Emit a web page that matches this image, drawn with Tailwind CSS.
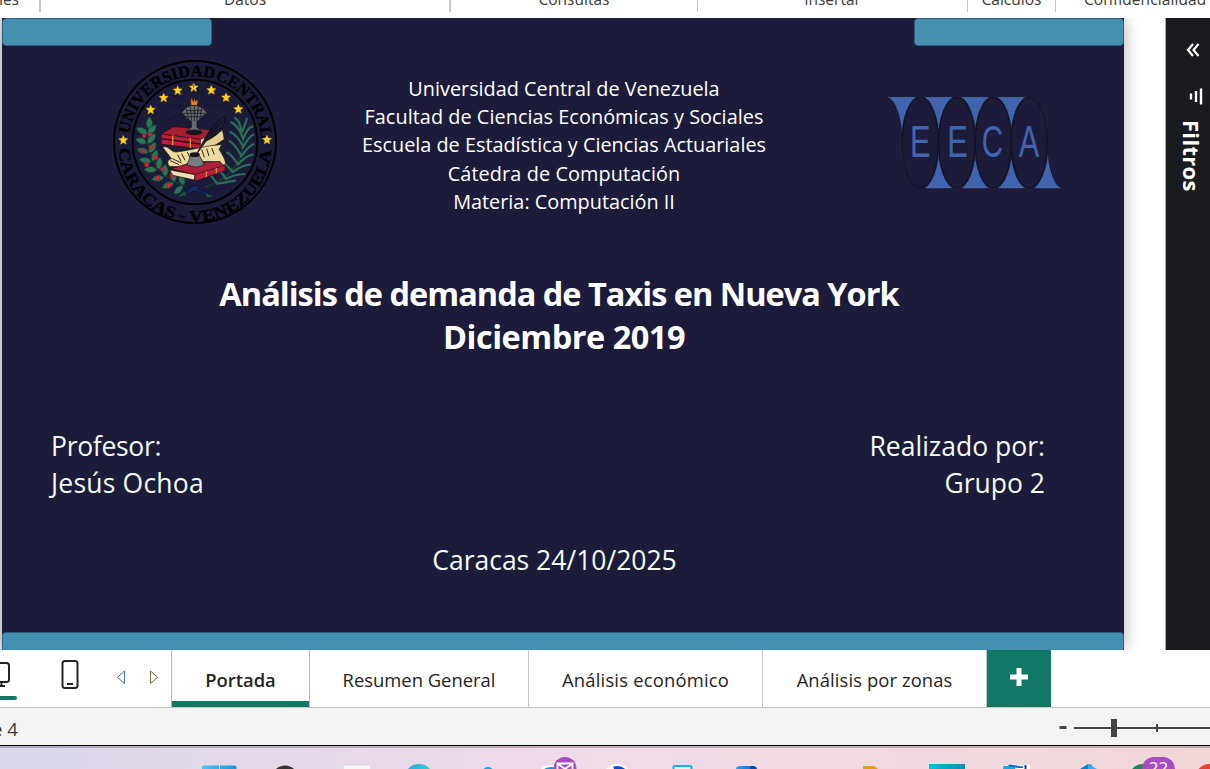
<!DOCTYPE html>
<html lang="es">
<head>
<meta charset="utf-8">
<title>Análisis de demanda de Taxis</title>
<script src="https://cdn.jsdelivr.net/npm/@tailwindcss/browser@4"></script>
</head>
<body class="w-[1210px] h-[769px] overflow-hidden flex flex-col bg-white font-['Open_Sans','Noto_Sans',sans-serif] text-[#252423]">

<!-- Ribbon group captions -->
<header class="h-[18px] shrink-0 flex overflow-hidden text-[15.500px] leading-[18px] text-[#3b3a39] whitespace-nowrap">
  <div class="w-[41px] h-3 border-r-2 border-[#c8c6c4] shrink-0"><p class="-mt-[10px] -ml-[1px]">les</p></div>
  <div class="w-[410px] h-3 border-r-2 border-[#c8c6c4] shrink-0 text-center"><p class="-mt-[10px]">Datos</p></div>
  <div class="w-[247px] h-3 border-r border-[#c8c6c4] shrink-0 text-center"><p class="-mt-[10px]">Consultas</p></div>
  <div class="w-[270px] h-3 border-r border-[#c8c6c4] shrink-0 text-center"><p class="-mt-[10px]">Insertar</p></div>
  <div class="w-[88px] h-3 border-r border-[#c8c6c4] shrink-0 text-center"><p class="-mt-[10px]">Cálculos</p></div>
  <div class="h-3 pl-[28px] shrink-0"><p class="-mt-[10px] tracking-[0.100px]">Confidencialidad</p></div>
</header>

<main class="h-[632px] shrink-0 flex overflow-hidden">
  <div class="w-[2px] bg-[#ececec]"></div>
  <!-- Report page -->
  <section class="w-[1122px] shrink-0 h-full bg-[#1c1c3a] flex flex-col text-white shadow-[0_0_16px_rgba(0,0,0,0.3)] z-10">
    <div class="flex justify-between h-[28px] shrink-0">
      <div class="w-[210px] h-[28px] bg-[#4590b1] border border-[#2d5f7c] rounded-[4px]"></div>
      <div class="w-[210px] h-[28px] bg-[#4590b1] border border-[#2d5f7c] rounded-[4px]"></div>
    </div>
    <div class="flex h-[186px] shrink-0 pl-[103px]">
      <svg class="w-[180px] h-[180px] mt-[6px] shrink-0" viewBox="0 0 540 540">
        <defs>
          <path id="arcTop" d="M72 252 A199 199 0 0 1 468 252"/>
          <path id="arcBottom" d="M41 280 A229 229 0 0 0 499 280"/>
          <path id="star" d="M0 -14 L4 -5 L14 -4 L6 3 L9 13 L0 8 L-9 13 L-6 3 L-14 -4 L-4 -5Z"/>
          <path id="leaf" d="M0 0 C-12 -6 -15 -20 -7 -32 C6 -24 10 -10 0 0Z"/>
        </defs>
        <circle cx="270" cy="270" r="243" fill="none" stroke="#000" stroke-width="6"/>
        <circle cx="270" cy="270" r="187" fill="none" stroke="#000" stroke-width="6"/>
        <g font-family="Liberation Serif" font-weight="700" font-size="49" fill="#000" stroke="#000" stroke-width="1">
          <text textLength="586" lengthAdjust="spacingAndGlyphs" word-spacing="-9"><textPath href="#arcTop" startOffset="6">UNIVERSIDAD CENTRAL</textPath></text>
          <text textLength="694" lengthAdjust="spacingAndGlyphs"><textPath href="#arcBottom" startOffset="10">CARACAS - VENEZUELA</textPath></text>
        </g>
        <g fill="#ffd21f" stroke="#e7a700">
          <use href="#star" x="137" y="173"/><use href="#star" x="176" y="137"/><use href="#star" x="218" y="115"/><use href="#star" x="266" y="106"/>
          <use href="#star" x="319" y="114"/><use href="#star" x="363" y="136"/><use href="#star" x="400" y="171"/><use href="#star" x="55" y="264"/><use href="#star" x="486" y="263"/>
        </g>
        <!-- Rays -->
        <g stroke="#0e0e20" stroke-width="2" stroke-dasharray="9 4">
          <path d="M266 120V82M246 126L222 92M286 126L310 92M236 142L190 128M297 142L345 128M230 160L178 160M302 160L356 160M232 185L186 205M302 185L346 205M255 120L245 84M277 120L289 84M238 195L206 222M298 195L330 222"/>
        </g>
        <!-- Coffee and laurel branches -->
        <g fill="none" stroke="#173d32" stroke-width="5"><path d="M134 215C115 285 150 375 240 402"/><path d="M405 215C430 290 400 375 300 405"/></g>
        <g fill="#2b7458" stroke="#123a31" stroke-width="2">
          <use href="#leaf" transform="translate(132 232) rotate(15) scale(1.15)"/>
          <use href="#leaf" transform="translate(127 246) rotate(-48) scale(1.15)"/><use href="#leaf" transform="translate(128 246) rotate(55) scale(1.15)"/>
          <use href="#leaf" transform="translate(125 274) rotate(-55) scale(1.1)"/><use href="#leaf" transform="translate(128 274) rotate(50) scale(1.15)"/>
          <use href="#leaf" transform="translate(130 302) rotate(-60) scale(1.1)"/><use href="#leaf" transform="translate(132 302) rotate(45) scale(1.15)"/>
          <use href="#leaf" transform="translate(139 330) rotate(-65) scale(1.15)"/><use href="#leaf" transform="translate(142 328) rotate(35) scale(1.15)"/>
          <use href="#leaf" transform="translate(155 354) rotate(-75) scale(1.15)"/><use href="#leaf" transform="translate(158 352) rotate(25) scale(1.15)"/>
          <use href="#leaf" transform="translate(177 377) rotate(-85) scale(1.15)"/><use href="#leaf" transform="translate(180 374) rotate(12) scale(1.15)"/>
          <use href="#leaf" transform="translate(206 393) rotate(-100) scale(1.15)"/><use href="#leaf" transform="translate(208 390) scale(1.15)"/>
          <use href="#leaf" transform="translate(234 402) rotate(-120) scale(1.1)"/><use href="#leaf" transform="translate(235 400) rotate(-5) scale(1.1)"/>
        </g>
        <g fill="none" stroke="#2b6e53" stroke-width="6.500" stroke-linecap="round">
          <path d="M408 235Q406 208 390 198M412 238Q424 210 425 200M413 256Q400 222 379 211M414 262Q428 226 442 224M413 282Q396 248 376 240M413 288Q432 252 445 248M408 310Q388 274 374 268M408 314Q432 280 445 277M398 336Q376 304 366 302M398 338Q424 310 443 308M384 360Q364 338 356 334M384 360Q410 340 434 338M362 380Q350 358 338 356M362 381Q386 368 418 366M336 394Q322 376 318 370M336 395Q360 392 390 386"/>
        </g>
        <g fill="#de2034" stroke="#741e2b"><circle cx="117" cy="252" r="6"/><circle cx="135" cy="247" r="6"/><circle cx="114" cy="298" r="6"/><circle cx="138" cy="285" r="6"/><circle cx="125" cy="338" r="7"/><circle cx="152" cy="316" r="7"/><circle cx="158" cy="378" r="7"/><circle cx="172" cy="351" r="6"/><circle cx="191" cy="400" r="7"/><circle cx="201" cy="372" r="6"/></g>
        <!-- Upper books -->
        <g stroke="#240d1c" stroke-width="2" stroke-linejoin="round">
          <path fill="#e5cf91" d="M284 258L352 232L358 262L330 280L284 290Z"/>
          <path fill="#a91d35" d="M168 246L205 224L350 236L286 262Z"/>
          <path fill="#b91f38" d="M168 246L286 262V290L170 277Z"/>
          <path fill="none" stroke-width="4" d="M168 260L286 276"/>
          <path fill="none" stroke="#d58e34" stroke-width="4" d="M203 250V280M256 257V288"/>
        </g>
        <!-- Scroll -->
        <g stroke="#33291f" stroke-width="2" stroke-linejoin="round">
          <path fill="#eddc9b" d="M173 286C190 278 196 300 213 300C246 298 300 280 350 278L342 292C350 305 360 320 362 335Q352 344 342 332C310 326 280 326 240 345L194 343C184 334 188 322 200 320Z"/>
          <path fill="none" stroke-width="3" d="M218 308L228 328M230 305L240 325M247 300L254 315M290 292L298 316M305 290L312 312M320 288L328 308M196 326L222 338M202 320L230 333"/>
        </g>
        <!-- Lower book -->
        <g stroke="#2a0e1c" stroke-width="2" stroke-linejoin="round">
          <path fill="#ad2038" d="M200 350L250 334L345 328L360 348L270 368Z"/>
          <path fill="#efe0ad" d="M194 354L270 368L268 384L204 370Z"/>
          <path fill="#b81f38" d="M270 367L360 340V356L270 388Z"/>
          <path fill="none" stroke="#d58e34" stroke-width="4" d="M304 358V375M334 348V364"/>
        </g>
        <!-- Quill and inkwell -->
        <path fill="#1c1c35" stroke="#080812" stroke-width="2" d="M276 304L300 258Q325 212 360 192Q362 225 338 246Q320 260 302 268Z"/><path stroke="#080812" stroke-width="2" d="M276 304L350 206M305 262L312 240M315 250L324 226M326 236L336 212M310 260L334 246M326 240L350 228"/>
        <path fill="#777b80" stroke="#121216" stroke-width="2" d="M246 338L257 310H283L298 338Q272 352 246 338Z"/><ellipse cx="269" cy="308" rx="15" ry="7" fill="#14151c"/>
        <!-- Lamp -->
        <g stroke="#0b0b10" stroke-width="2">
          <path fill="#e77922" d="M258 162Q254 145 260 135L265 148L269 134L272 148L277 138Q282 150 276 162Z"/>
          <path fill="#686c70" d="M244 166Q267 154 290 166L308 184L292 192Q288 204 276 208V226Q288 232 290 242H246Q248 232 259 226V208Q246 204 242 192L228 184Z"/>
          <path fill="none" d="M231 184H304M244 170L252 204M256 164L260 206M268 162V208M280 164L275 206M290 168L284 204M242 176H292M246 194H288"/>
          <ellipse cx="267" cy="241" rx="24" ry="7" fill="#16171b"/>
        </g>
        <path fill="#142c66" stroke="#0b1540" stroke-width="3" d="M258 402H280L282 414L312 424L294 426L270 416L240 430L248 418L228 416L256 410Z"/>
        <path fill="#1d5541" d="M216 434L240 418L244 430ZM300 422L326 434L306 436Z"/>
      </svg>
      <div class="w-[558px] shrink-0 pt-[29px] text-center text-[19.850px] leading-[28.2px] whitespace-nowrap">
        <p>Universidad Central de Venezuela</p>
        <p class="tracking-[0.050px]">Facultad de Ciencias Económicas y Sociales</p>
        <p>Escuela de Estadística y Ciencias Actuariales</p>
        <p class="tracking-[0.100px]">Cátedra de Computación</p>
        <p>Materia: Computación II</p>
      </div>
      <svg class="w-[190px] h-[115px] mt-[39px] ml-[37px] shrink-0" viewBox="0 0 570 345">
        <g fill="#4064ae">
          <path d="M24 37A48 136 0 0 1 67 160A54 136 0 0 1 110 37Z"/>
          <path d="M132 37A55 136 0 0 1 176 160A55 136 0 0 1 220 37Z"/>
          <path d="M242 37A55 136 0 0 1 286 160A54 136 0 0 1 329 37Z"/>
          <path d="M351 37A54 136 0 0 1 394 160A54 136 0 0 1 438 37Z"/>
          <path d="M132 309A55 136 0 0 0 176 186A55 136 0 0 0 220 309Z"/>
          <path d="M242 309A55 136 0 0 0 286 186A54 136 0 0 0 329 309Z"/>
          <path d="M351 309A54 136 0 0 0 394 186A54 136 0 0 0 438 309Z"/>
          <path d="M459 309A54 136 0 0 0 502 186A48 136 0 0 0 542 309Z"/>
        </g>
        <g fill="#1c1c3a" stroke="#1c1c3a" stroke-width="7"><ellipse cx="121" cy="173" rx="54" ry="136"/><ellipse cx="231" cy="173" rx="54.500" ry="136"/><ellipse cx="340" cy="173" rx="54" ry="136"/><ellipse cx="448" cy="173" rx="54" ry="136"/></g>
        <g fill="none" stroke="#101018" stroke-width="2.500"><ellipse cx="121" cy="173" rx="54" ry="136"/><ellipse cx="231" cy="173" rx="54.500" ry="136"/><ellipse cx="340" cy="173" rx="54" ry="136"/><ellipse cx="448" cy="173" rx="54" ry="136"/></g>
        <path fill="none" stroke="#6a7590" stroke-opacity=".7" stroke-width="1.500" d="M24 37H102M140 37H212M250 37H321M359 37H430M140 309H212M250 309H321M359 309H430M467 309H542"/>
        <g fill="#4064ae" font-family="Liberation Sans" font-size="132">
          <text transform="translate(90 217) scale(.7 1)">E</text><text transform="translate(202 217) scale(.7 1)">E</text><text transform="translate(305 217) scale(.67 1)">C</text><text transform="translate(416 217) scale(.7 1)">A</text>
        </g>
      </svg>
    </div>
    <h1 class="pt-[40px] h-[175px] shrink-0 text-center text-[32.500px] leading-[43px] font-bold whitespace-nowrap"><span class="-ml-[8px] tracking-[-1px]">Análisis de demanda de Taxis en Nueva York</span><br><span class="ml-[2px] tracking-[-0.500px]">Diciembre 2019</span></h1>
    <div class="flex justify-between pl-[49px] pr-[79px] pt-[21px] text-[26.500px] leading-[37px] text-[#f3fbf3]">
      <p><span class="tracking-[-0.300px]">Profesor:</span><br><span class="tracking-[0.200px]">Jesús Ochoa</span></p>
      <p class="text-right">Realizado por:<br>Grupo 2</p>
    </div>
    <p class="pt-[40px] -ml-[17px] text-center text-[26.500px] leading-[37px] text-[#f3fbf3]">Caracas 24/10/2025</p>
    <div class="mt-auto h-[18px] shrink-0 bg-[#4590b1] border border-b-0 border-[#2d5f7c] rounded-t-[4px]"></div>
  </section>
  <div class="w-[41px] shrink-0"></div>
  <!-- Collapsed filter pane -->
  <aside class="w-[45px] shrink-0 bg-[#1a1b1f] border-l border-[#a8a8a8] text-white flex flex-col items-center z-20">
    <svg class="w-[14px] h-[14px] mt-[25px] ml-[10px]" viewBox="0 0 14 14" fill="none" stroke="#fff" stroke-width="2.200"><path d="M7 1L2 7L7 13M12.500 1L7.500 7L12.500 13"/></svg>
    <svg class="w-[14px] h-[17px] mt-[31px] ml-[16px]" viewBox="0 0 14 17" fill="none" stroke="#fff" stroke-width="2.400"><path d="M2 5.500V11.500M7 3V14M12 .5V16.500"/></svg>
    <p class="[writing-mode:vertical-rl] mt-[15px] ml-[7px] text-[22px] leading-[28px] font-bold tracking-[0.300px]">Filtros</p>
  </aside>
</main>

<!-- Page tabs -->
<nav class="h-[58px] shrink-0 border-b border-[#c8c8c8] flex text-[18.400px] whitespace-nowrap">
  <svg class="w-[171px] h-[57px] shrink-0" viewBox="0 0 171 57" fill="none">
    <path d="M0 13H6.500Q9 13 9 15.500V29.500Q9 32 6.500 32H0M1.500 32V36M0 36H5" stroke="#252423" stroke-width="2"/>
    <path d="M-2 48H15" stroke="#117865" stroke-width="4" stroke-linecap="round"/>
    <rect x="62.500" y="11" width="15" height="27" rx="2.500" stroke="#252423" stroke-width="2"/><path d="M67 34H73" stroke="#252423" stroke-width="2"/>
    <path d="M124.500 21V33.500L117.500 27.300Z" stroke="#43719a"/><path d="M150.500 21V33.500L157.500 27.300Z" stroke="#8a6544"/>
  </svg>
  <div class="w-[139px] border-x border-[#b8b8b8] text-center leading-[59px] font-semibold shadow-[inset_0_-6px_0_#117865]">Portada</div>
  <div class="w-[219px] border-r border-[#c8c8c8] text-center leading-[59px]">Resumen General</div>
  <div class="w-[234px] border-r border-[#c8c8c8] text-center leading-[59px] tracking-[0.200px]">Análisis económico</div>
  <div class="w-[224px] border-r border-[#c8c8c8] text-center leading-[59px] tracking-[0.100px]">Análisis por zonas</div>
  <div class="w-[64px] bg-[#117865] flex items-center justify-center"><svg class="w-[18px] h-[18px] -mt-[3px]" viewBox="0 0 18 18"><path d="M9 0V18M0 9H18" stroke="#fff" stroke-width="5"/></svg></div>
</nav>

<!-- Status bar -->
<div class="h-[37px] shrink-0 bg-[#f4f4f4] flex justify-between overflow-hidden">
  <p class="text-[18.500px] leading-[42px] -ml-[8px] text-[#3b3a39]">e 4</p>
  <svg class="w-[155px] h-[37px]" viewBox="0 0 155 37" fill="#444"><rect x="4.500" y="18" width="7" height="3"/><rect x="19" y="19" width="136" height="2"/><rect x="56" y="11" width="6" height="18"/><rect x="101" y="16" width="2" height="8"/></svg>
</div>
<div class="h-px shrink-0 bg-black"></div>

<!-- Taskbar -->
<footer class="h-[23px] shrink-0 border-t-2 border-black/20 bg-linear-to-r from-[#d9d6e8] via-[#f0dbe8] to-[#f0d6d6]">
  <svg class="w-[1210px] h-[21px]" viewBox="0 748 1210 21">
    <defs>
      <linearGradient id="win"><stop stop-color="#4cc5fb"/><stop offset="1" stop-color="#1a93de"/></linearGradient>
      <linearGradient id="edge"><stop stop-color="#22a8e8"/><stop offset=".7" stop-color="#31c6d6"/><stop offset="1" stop-color="#4fd58c"/></linearGradient>
      <linearGradient id="bl"><stop stop-color="#22a4f5"/><stop offset=".65" stop-color="#1678e4"/><stop offset=".7" stop-color="#0d3fc0"/></linearGradient>
      <linearGradient id="teal"><stop stop-color="#00c2d0"/><stop offset="1" stop-color="#0e8fb0"/></linearGradient>
    </defs>
    <path fill="url(#win)" d="M202 769V767Q202 765.500 204 765.500H219V769ZM220 769V765.500H234.500Q236.500 765.500 236.500 767V769Z"/>
    <circle cx="285" cy="779" r="13.500" fill="#333"/>
    <rect x="344" y="765.500" width="26" height="10" rx="1" fill="#f8f8f8"/>
    <circle cx="419" cy="779" r="15" fill="url(#edge)"/>
    <circle cx="488" cy="773" r="6" fill="#1b9fe0"/>
    <circle cx="551" cy="780" r="14" fill="#1596d1" stroke="#fff" stroke-width="2"/><circle cx="551" cy="781" r="11" fill="#fff"/>
    <circle cx="565" cy="768.500" r="11.500" fill="#a84cc0"/><path fill="none" stroke="#fff" stroke-width="1.800" d="M557.500 769V763.500H572.500V769M558 764L565 769L572 764"/>
    <circle cx="617" cy="779" r="14" fill="#0b4ad8" stroke="#fff" stroke-width="2"/><path d="M607 769L613 766L614 769Z" fill="#fff"/>
    <rect x="673.500" y="766" width="18" height="9" rx="1" fill="#eef5fa" stroke="#16b1f2" stroke-width="2"/>
    <path fill="url(#bl)" d="M736 769Q736 766 740 766H754Q757 767 757 769Z"/>
    <path fill="#e0a008" d="M863 769V766H874L878 769Z"/>
    <rect x="929" y="764" width="36" height="5" fill="url(#teal)"/>
    <path fill="#fff" d="M1003 769L1004 765.500L1030 764.500V769Z"/><path fill="#16a8e8" d="M1003 769L1003.500 766H1016L1015 769Z"/><path fill="#0d6cbd" d="M1008 766L1009 764.500L1023 766.500V768H1018Z"/><path d="M1025.500 769V765" stroke="#18436e" stroke-width="2"/>
    <path fill="#0d7fd3" d="M1080 769L1088 764L1092 765V769Z"/><path fill="#34aef6" d="M1088 769V764L1097 769Z"/>
    <circle cx="1143" cy="778" r="14" fill="#1c8757"/>
    <rect x="1142" y="757" width="33" height="24" rx="12" fill="#a84cc0"/>
    <text x="1158.500" y="774" text-anchor="middle" font-family="Noto Sans" font-size="17" fill="#fff">22</text>
    <circle cx="1209" cy="777" r="13" fill="#e84235"/>
  </svg>
</footer>
</body>
</html>
